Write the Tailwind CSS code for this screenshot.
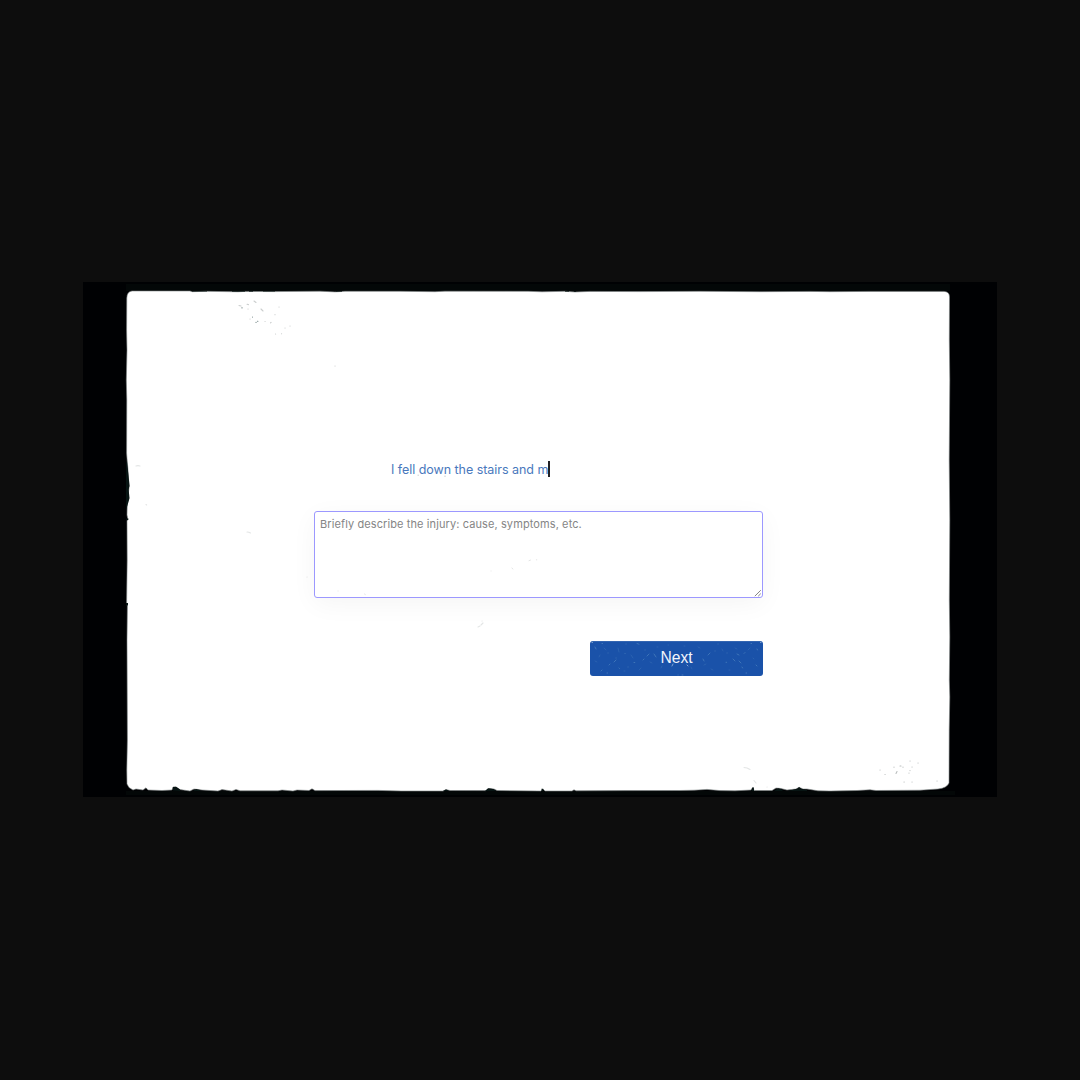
<!DOCTYPE html>
<html lang="en">
<head>
<meta charset="utf-8">
<title>Describe the injury</title>
<script src="https://cdn.jsdelivr.net/npm/@tailwindcss/browser@4"></script>
</head>
<body class="bg-[#0d0d0d] w-[1080px] h-[1080px] overflow-hidden flex flex-col items-center pt-[282px]">
<main class="relative w-[914px] h-[515px] bg-[#000103] shrink-0">
  <!-- Film gate: paper, ragged edges and dust -->
  <svg class="absolute inset-0" width="914" height="515" viewBox="83 282 914 515" aria-hidden="true">
    <path d="M126 284H950V291H126ZM126 791H955V795H126Z" fill="#030707"/>
    <path fill="#fff" stroke="#7d8585" stroke-width=".6" d="M132 291H190L192 291.7 206 291.3 238 291.8 245 291.4 274 291.6 320 291.2 335 291.9 345 291.3H400L435 291.7 445 291.2 528 291.3 542 291.8 565 291.3 575 292 590 291.4 640 291.6 700 291.3 760 291.7 810 291.4 830 291.7 870 291.4H944Q949.5 291.5 949.5 297L949.3 340 949.8 380 949.2 460 949.8 520 949.3 600 949.8 637 949.3 680 949.8 697 949.2 730 949 783Q947 788 938 789L920 790.2 876 790.5 870 789.8 857 790.5 830 791 818 790.8 807 789 803 789 799 787.2 796 789 787 790 781 788.5 776 788 772 790.5 754 790.5 753 787 751 790 735 790.8 720 790.6 707 789.4 694 790.2 680 790.5 625 790.6 576 790.8 574 789.8 572 791H545L543 789 541 791 497 790.5 494 789 489 788.5 486 790.6 450 790.5 446 789.6 443 791H402L378 790.4 315 790.6 312 788.8 309 790.5 297 790 293 791 282 790 278 790.8H240L236 789.4 232 791 222 789.6 218 791 202 790 194 789 190 791 180 789.6 176 787 173 787 172 790 162 790.5 148 790 146 787.8 143 790 136 789 133 790 129 787.5 127 784 126.8 770 127.4 740 127 640 127.4 606 126.6 604 127.2 560 127 521 127.8 519 127 515 127.2 504 128.8 499 128.2 494 129 488 128.6 480 128 470 127.2 461 126.6 453 126.8 400 126.3 380 127 350 126.6 330 126.8 298Q127 291.5 132 291Z"/>
    <g fill="#071413">
      <path d="M172.8 790.5 173 787 176 786.8 180 789.5V791ZM485 791 488 788.3 493 789 496 791ZM751.5 791 752 788 753.8 787.5 754 791ZM774 791 778 788.3 781 789 783 791ZM788 791 798 788.6 799 787 801 788.7 807 790V791ZM443 791 446 789.6 449 791ZM541.5 791V788.7H543.2V791ZM193 791 196 789 200 790V791Z"/>
      <path d="M127 462 128.5 476 129.6 486 128.6 489 129.5 498 127.6 505 126 510V462ZM126 518.5H128.3V520H126ZM126 603H128V605.5H126Z"/>
      <path opacity=".6" d="M192 290.8H207V291.8H192ZM232 290.8H245V292H232ZM249 291H253V292H249ZM263 291H275V291.8H263ZM336 291H342V292H336ZM565 291H569V292H565ZM574 291H576V292H574Z"/>
    </g>
    <g fill="none" stroke="#b9bdbd" stroke-linecap="round" stroke-width="1.1">
      <path d="M239 305.5l2 .5M247 304.3l1.5.3M248 309l.1 0M261 309l2 2M265 321.5h.1M271 322.5h.1M275 314.5v.3M279 307h.1M281.5 333.7h.1M285 328h.1M290 326h.1M275.5 334h.1M250 319h.1M254 301l2 1.5M270.5 322.8l.5-.5M335 366h.1" opacity=".75"/>
      <path d="M242 307.5v.4M252.5 317v.1M257.5 321.3h.4M256 322.4h.1" stroke="#7f9090"/>
      <path d="M136 466q2-.8 4 0M146 504.5l.6.5M247 532q2 0 3.5 1M307 577h.1M478 627l2-1M481 625l2-2M482 621h.1M744 767.5q3 .2 6 2M754 780.5l2 2.5M767 787h.1" opacity=".4"/>
      <path d="M894 767v.3M900 766h1M912 767h.1M896 773.5l1-2M885 774.5h.1M903 767v.2M910 770.5v.1M909 773v.1M904 782h.2M912 782h.1M880 770h.1M918 763h.1M910 761h.1M937 781h.1"/>
    </g>
  </svg>

  <form class="relative w-[449px] ml-[231px] pt-[179px] flex flex-col">
    <div class="relative flex items-center h-4 ml-[77px]">
      <span class="pt-[2px] font-['Inter',sans-serif] text-[12.5px] leading-4 tracking-[-0.04px] whitespace-nowrap text-[#4978bd]">I fell down the stairs and m</span><span class="w-[2px] h-4 bg-[#222226]"></span>
      <svg class="absolute left-0 top-0" width="60" height="18" viewBox="391 461 60 18" fill="none" stroke="#c3c5c8" stroke-linecap="round"><path d="M418 475.2h.4M445 476v.5"/></svg>
    </div>
    <div class="relative mt-[34px] h-[87px] rounded-[3px] border border-[#9c98ff] bg-white px-[5px] pt-[4px] shadow-[0_6px_26px_rgba(0,0,0,0.042)]">
      <p class="font-['Inter',sans-serif] text-[11px] leading-4 tracking-[0.1px] whitespace-nowrap text-[#858585]">Briefly describe the injury: cause, symptoms, etc.</p>
      <svg class="absolute right-0 bottom-0" width="8" height="8" viewBox="0 0 8 8" fill="none" stroke="#777" stroke-width=".9"><path d="M.8 7.2 6.8 1.2M4.2 7.2 6.8 4.6"/></svg>
      <svg class="absolute left-0 top-0" width="447" height="85" viewBox="315 512 447 85" fill="none" stroke="#e4e5e5" stroke-linecap="round"><path d="M529 560.7l1.5-.6M536.3 559.8h.5M491 571h.1M512 568l.8 1M338 591h.1M364.5 594l.8.5"/></svg>
    </div>
    <button type="button" class="relative self-end mt-[43px] w-[173px] h-[35px] rounded-[3px] bg-[#1a52a9] overflow-hidden flex items-center justify-center">
      <svg class="absolute inset-0" width="173" height="35" viewBox="0 0 173 35" fill="none" stroke="#4b80bd" stroke-linecap="round">
        <path stroke="#5b82bd" stroke-width=".5" d="M2 .3H171"/>
        <path opacity=".75" d="M12 2.5h.6M36 3h.1M47 2.5l2 .7M18 12h.1M35 12.5h.1M44 21.5h.8M17 32h.6M29 27l.5.5M11 30l1-1M5 6l1 2M55 9h.1M59 13l-2 2M54 18l-1 1M26 17h.1M38 26h.1M64 13l2 3M118 14l2-2M113 18l1 2M125 10h.1M136 21.3h.7M137 12h.1M143 18l2 2M152 26l.6 1M156 32h.7M161 2.5h.6M154 12.5l1-1M128 3h.1M167 8l.5 1M166 24l1 1M88 34h.1M92 34h1M147 13l2 1M149 20l2 2M24 21l2-2M20 23l-1 1"/>
        <path opacity=".35" d="M5 20l2 1M14 7l2 2M28 7l1 4M41 14l2 3M49 29l2-2M67 6h1M71 27l1-2M101 26l1 2M108 6l2 1M121 28l2 1M132 8l1 2M139 29h1M158 9l2-2M163 17l1 1M9 16l1-2M34 30h1M78 4h.5M94 5h1M145 7l2 1M60 21l2 1M114 24l2-1"/>
        <path stroke="#9bb8dc" opacity=".8" d="M82 25l1-2M97 24l1 1M2 1.5h.5M170.5 1.5h.5"/>
      </svg>
      <span class="relative pb-[2px] font-['Liberation_Sans',sans-serif] text-[15.6px] leading-5 text-[#f2f5fb]">Next</span>
    </button>
  </form>
</main>
</body>
</html>
